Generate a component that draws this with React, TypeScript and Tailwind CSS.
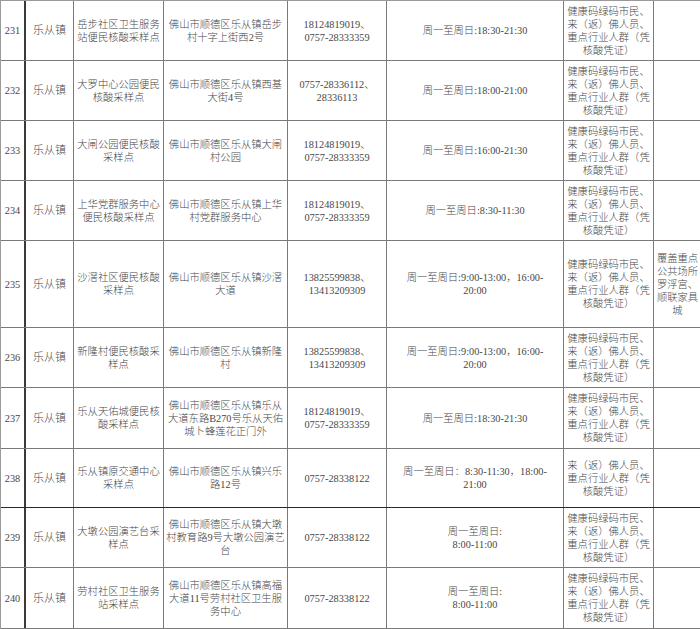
import React from "react";

type Row = {
  no: string;
  h: string;
  name: string[];
  addr: string[];
  phone: string[];
  hours: string[];
  people?: string[];
  note?: string[];
  dark?: boolean;
};

const STD = ["健康码绿码市民、", "来（返）佛人员、", "重点行业人群（凭", "核酸凭证）"];
const P1 = ["18124819019、", "0757-28333359"];
const P2 = ["13825599838、", "13413209309"];

const rows: Row[] = [
  { no: "231", h: "h-[60px]", name: ["岳步社区卫生服务", "站便民核酸采样点"], addr: ["佛山市顺德区乐从镇岳步", "村十字上街西2号"], phone: P1, hours: ["周一至周日:18:30-21:30"] },
  { no: "232", h: "h-[60px]", name: ["大罗中心公园便民", "核酸采样点"], addr: ["佛山市顺德区乐从镇西基", "大街4号"], phone: ["0757-28336112、", "28336113"], hours: ["周一至周日:18:00-21:00"] },
  { no: "233", h: "h-[60px]", name: ["大闸公园便民核酸", "采样点"], addr: ["佛山市顺德区乐从镇大闸", "村公园"], phone: P1, hours: ["周一至周日:16:00-21:30"] },
  { no: "234", h: "h-[60px]", name: ["上华党群服务中心", "便民核酸采样点"], addr: ["佛山市顺德区乐从镇上华", "村党群服务中心"], phone: P1, hours: ["周一至周日:8:30-11:30"] },
  { no: "235", h: "h-[87px]", name: ["沙滘社区便民核酸", "采样点"], addr: ["佛山市顺德区乐从镇沙滘", "大道"], phone: P2, hours: ["周一至周日:9:00-13:00，16:00-", "20:00"], note: ["覆盖重点", "公共场所", "罗浮宫、", "顺联家具", "城"] },
  { no: "236", h: "h-[60px]", name: ["新隆村便民核酸采", "样点"], addr: ["佛山市顺德区乐从镇新隆", "村"], phone: P2, hours: ["周一至周日:9:00-13:00，16:00-", "20:00"] },
  { no: "237", h: "h-[61px]", name: ["乐从天佑城便民核", "酸采样点"], addr: ["佛山市顺德区乐从镇乐从", "大道东路B270号乐从天佑", "城卜蜂莲花正门外"], phone: P1, hours: ["周一至周日:18:30-21:30"] },
  { no: "238", h: "h-[59px]", name: ["乐从镇原交通中心", "采样点"], addr: ["佛山市顺德区乐从镇兴乐", "路12号"], phone: ["0757-28338122"], hours: ["周一至周日：8:30-11:30，18:00-", "21:00"], people: ["来（返）佛人员、", "重点行业人群（凭", "核酸凭证）"], dark: true },
  { no: "239", h: "h-[60px]", name: ["大墩公园演艺台采", "样点"], addr: ["佛山市顺德区乐从镇大墩", "村教育路9号大墩公园演艺", "台"], phone: ["0757-28338122"], hours: ["周一至周日:", "8:00-11:00"] },
  { no: "240", h: "h-[61px]", name: ["劳村社区卫生服务", "站采样点"], addr: ["佛山市顺德区乐从镇高福", "大道11号劳村社区卫生服", "务中心"], phone: ["0757-28338122"], hours: ["周一至周日:", "8:00-11:00"] },
];

function Cell({ lines, className = "" }: { lines?: string[]; className?: string }) {
  return (
    <div className={`flex flex-col items-center justify-center border-r border-[#7a7a7a] text-center whitespace-nowrap font-light ${className}`}>
      {lines?.map((l, i) => (
        <span key={i}>{l}</span>
      ))}
    </div>
  );
}

export default function App() {
  return (
    <div
      className="w-[700px] h-[629px] bg-white text-[#474747] text-[10.3px] leading-[13px] overflow-hidden"
      style={{ fontFamily: '"Liberation Serif", "Noto Sans CJK SC", serif' }}
    >
      <div className="border-t border-l border-[#9a9a9a]">
        {rows.map((r) => (
          <div
            key={r.no}
            className={`grid grid-cols-[25px_48px_90px_124px_99px_177px_90px_47px] ${r.h} border-b ${
              r.dark ? "border-[#2a2a2a]" : "border-[#7a7a7a]"
            }`}
          >
            <Cell lines={[r.no]} className="!border-r-2 !border-[#3a3a3a]" />
            <Cell lines={["乐从镇"]} className="text-[11px]" />
            <Cell lines={r.name} />
            <Cell lines={r.addr} />
            <Cell lines={r.phone} />
            <Cell lines={r.hours} />
            <Cell lines={r.people ?? STD} />
            <Cell lines={r.note} className="border-r-0" />
          </div>
        ))}
      </div>
    </div>
  );
}
